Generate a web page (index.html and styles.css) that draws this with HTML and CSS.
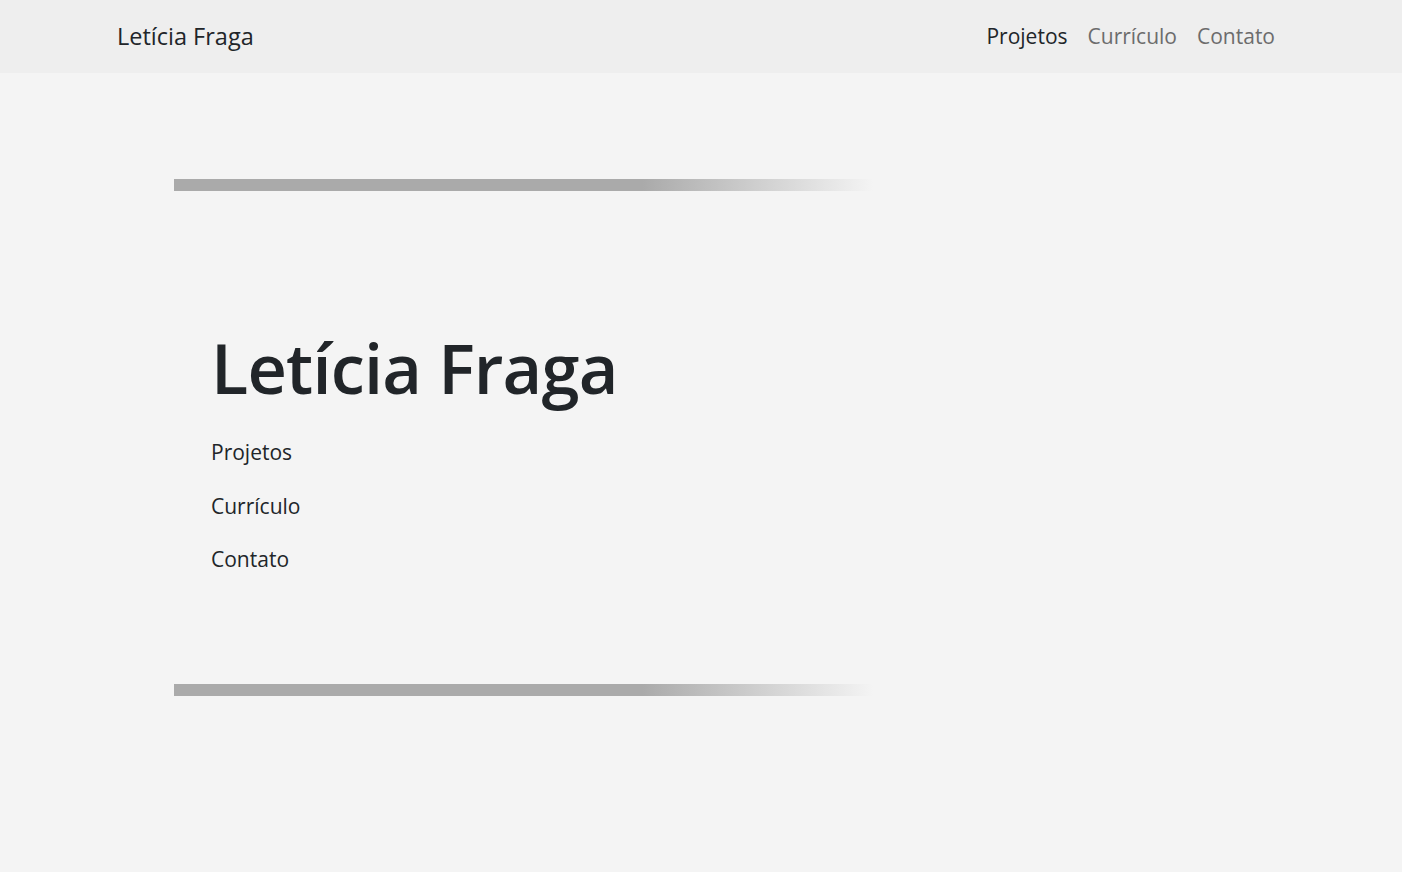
FILE: index.html
```html
<!DOCTYPE html>
<html lang="pt-BR">
<head>
<meta charset="utf-8">
<title>Letícia Fraga</title>
<link rel="stylesheet" href="styles.css">
</head>
<body>
<header class="navbar">
  <a class="brand" href="#">Letícia Fraga</a>
  <nav class="nav">
    <a class="nav-link active" href="#">Projetos</a>
    <a class="nav-link" href="#">Currículo</a>
    <a class="nav-link" href="#">Contato</a>
  </nav>
</header>
<main class="main">
  <div class="frame">
    <div class="bar"></div>
    <section class="hero">
      <h1 class="title">Letícia Fraga</h1>
      <ul class="links">
        <li><a href="#">Projetos</a></li>
        <li><a href="#">Currículo</a></li>
        <li><a href="#">Contato</a></li>
      </ul>
    </section>
    <div class="bar"></div>
  </div>
</main>
</body>
</html>
```
FILE: styles.css
```css
* { box-sizing: border-box; }
html, body { margin: 0; padding: 0; }
body {
  background: #f4f4f4;
  font-family: "Open Sans", "Noto Sans", sans-serif;
  color: #212529;
  min-height: 872px;
}
a { text-decoration: none; color: inherit; }

.navbar {
  height: 73px;
  background: #eeeeee;
  display: flex;
  align-items: center;
  justify-content: space-between;
  padding: 0 127px 0 117px;
}
.brand {
  font-size: 23.5px;
  color: #212529;
  padding-bottom: 2px;
}
.nav {
  display: flex;
  gap: 20px;
  padding-bottom: 2px;
}
.nav-link {
  font-size: 21px;
  color: #6c6c6c;
}
.nav-link.active { color: #212529; }

.main { padding-top: 106px; }
.frame {
  margin-left: 174px;
  width: 699px;
}
.bar {
  height: 12px;
  background: linear-gradient(to right, #aaaaaa 67%, rgba(244,244,244,0));
}
.hero {
  padding: 135px 0 110px 37px;
}
.title {
  margin: 0 0 27px;
  font-size: 68.5px;
  font-weight: 600;
  line-height: 84px;
  letter-spacing: -0.8px;
}
.links {
  list-style: none;
  margin: 0;
  padding: 0;
  display: flex;
  flex-direction: column;
  gap: 23.5px;
}
.links a {
  font-size: 21px;
  line-height: 30px;
  color: #212529;
}
```
